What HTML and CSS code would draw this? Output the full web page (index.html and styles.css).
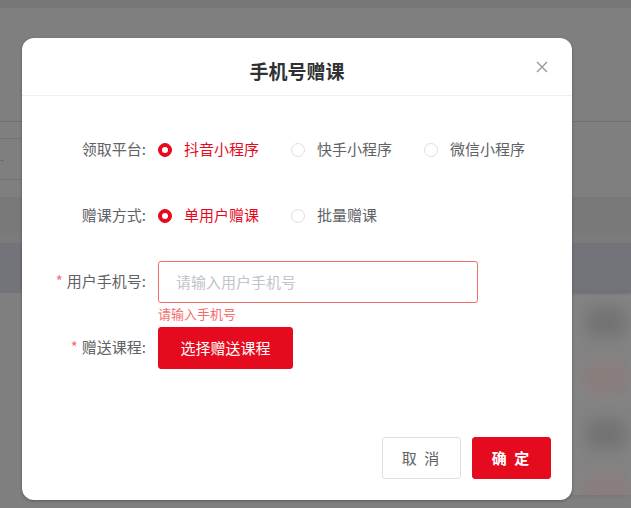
FILE: index.html
```html
<!DOCTYPE html>
<html lang="zh-CN">
<head>
    <meta charset="UTF-8">
    <meta name="viewport" content="width=device-width, initial-scale=1.0">
    <title>手机号赠课</title>
    <link rel="stylesheet" href="styles.css">
</head>
<body>
    <!-- dimmed page behind the dialog -->
    <div class="page">
        <div class="topbar"></div>
        <div class="hline top-line"></div>
        <div class="filter-row">
            <span class="dash">-</span>
        </div>
        <div class="band"></div>
        <div class="strip"></div>
        <div class="table-head"></div>
        <div class="table-body">
            <div class="side-card">
                <div class="blob dark"></div>
                <div class="blob pink"></div>
                <div class="blob dark"></div>
                <div class="blob pink"></div>
            </div>
        </div>
    </div>

    <div class="dialog">
        <div class="dialog-header">
            <span class="dialog-title">手机号赠课</span>
            <svg class="close" viewBox="0 0 12 12" width="12" height="12">
                <path d="M1 1 L11 11 M11 1 L1 11" stroke="#909399" stroke-width="1.2" fill="none"/>
            </svg>
        </div>

        <div class="dialog-body">
            <div class="form-item">
                <label class="form-label">领取平台:</label>
                <div class="form-content">
                    <span class="radio checked"><span class="radio-dot"></span>抖音小程序</span>
                    <span class="radio"><span class="radio-dot"></span>快手小程序</span>
                    <span class="radio"><span class="radio-dot"></span>微信小程序</span>
                </div>
            </div>

            <div class="form-item">
                <label class="form-label">赠课方式:</label>
                <div class="form-content">
                    <span class="radio checked"><span class="radio-dot"></span>单用户赠课</span>
                    <span class="radio"><span class="radio-dot"></span>批量赠课</span>
                </div>
            </div>

            <div class="form-item tight">
                <label class="form-label"><span class="req">*</span>用户手机号:</label>
                <div class="form-content">
                    <input class="input is-error" type="text" placeholder="请输入用户手机号">
                </div>
            </div>
            <div class="form-error">请输入手机号</div>

            <div class="form-item">
                <label class="form-label"><span class="req">*</span>赠送课程:</label>
                <div class="form-content">
                    <button class="btn btn-primary btn-pick">选择赠送课程</button>
                </div>
            </div>
        </div>

        <div class="dialog-footer">
            <button class="btn btn-default">取 消</button>
            <button class="btn btn-primary">确 定</button>
        </div>
    </div>
</body>
</html>
```

FILE: styles.css
```css
* { box-sizing: border-box; }

body {
    margin: 0;
    background: #7f7f7f;
    font-family: "Noto Sans CJK SC", "Noto Sans", sans-serif;
    overflow: hidden;
}

.page {
    width: 631px;
    height: 508px;
}
.topbar {
    height: 8px;
    background: #777;
}
.hline {
    height: 1px;
    background: #6f6f6f;
}
.top-line { margin-top: 113px; }
.filter-row {
    height: 42px;
    width: 22px;
    border-top: 1px solid #727272;
    border-bottom: 1px solid #727272;
    margin-top: 16px;
}
.dash {
    color: #5d6a66;
    font-size: 12px;
    line-height: 1;
    display: block;
    padding-top: 14px;
}
.band {
    height: 36px;
    margin-top: 17px;
    background: #787878;
}
.strip {
    height: 10px;
    background: #7c7a7b;
}
.table-head {
    height: 50px;
    background: #737479;
}
.table-body {
    display: flex;
    justify-content: flex-end;
    padding-top: 2px;
}
.side-card {
    width: 59px;
    height: 200px;
    background: #848484;
    box-shadow: -3px 0 6px rgba(0,0,0,0.12);
    padding: 12px 0 0 14px;
    overflow: hidden;
}
.blob {
    width: 40px;
    height: 30px;
    filter: blur(8px);
    margin-bottom: 26px;
}
.blob.dark { background: #727272; }
.blob.pink { background: #8b7c7c; }

/* dialog */
.dialog {
    position: absolute;
    left: 22px;
    top: 38px;
    width: 550px;
    height: 462px;
    background: #fff;
    border-radius: 12px;
    box-shadow: 0 1px 3px rgba(0,0,0,0.3);
}
.dialog-header {
    position: relative;
    height: 58px;
    padding-top: 20px;
    text-align: center;
    border-bottom: 1px solid #ebeef5;
}
.dialog-title {
    font-size: 19px;
    font-weight: bold;
    line-height: 26px;
    color: #303133;
}
.close {
    position: absolute;
    left: 514px;
    top: 23px;
}

.dialog-body {
    padding-top: 33px;
}
.form-item {
    display: flex;
    align-items: center;
    height: 42px;
    margin-bottom: 24px;
}
.form-item.tight { margin-bottom: 0; }
.form-label {
    width: 136px;
    padding: 0 12px 3px 0;
    text-align: right;
    font-size: 15px;
    color: #606266;
}
.req {
    color: #f56c6c;
    margin-right: 4px;
}
.form-content {
    display: flex;
    align-items: center;
}

.radio {
    display: flex;
    align-items: center;
    font-size: 15px;
    color: #606266;
    margin-right: 32px;
    padding-bottom: 3px;
}
.radio-dot {
    width: 14px;
    height: 14px;
    border: 1px solid #dcdfe6;
    border-radius: 50%;
    margin: 2px 12px 0 0;
    position: relative;
}
.radio.checked { color: #e60a1e; }
.radio.checked .radio-dot {
    background: #e60a1e;
    border-color: #e60a1e;
}
.radio.checked .radio-dot::after {
    content: "";
    position: absolute;
    left: 3px;
    top: 3px;
    width: 6px;
    height: 6px;
    border-radius: 50%;
    background: #fff;
}

.input {
    width: 320px;
    height: 42px;
    border: 1px solid #dcdfe6;
    border-radius: 3px;
    padding: 0 17px 2px;
    font-size: 15px;
    font-family: inherit;
    color: #606266;
    outline: none;
}
.input.is-error { border-color: #f56c6c; }
.input::placeholder { color: #c0c4cc; }

.form-error {
    height: 24px;
    padding: 3px 0 0 136px;
    font-size: 13px;
    line-height: 15px;
    color: #f56c6c;
}

.btn {
    height: 42px;
    border-radius: 3px;
    font-size: 15px;
    font-family: inherit;
    padding-bottom: 2px;
    cursor: pointer;
}
.btn-primary {
    background: #e60a1e;
    border: 1px solid #e60a1e;
    color: #fff;
}
.btn-default {
    background: #fff;
    border: 1px solid #dcdfe6;
    color: #606266;
}
.btn-pick {
    width: 135px;
}

.dialog-footer {
    display: flex;
    justify-content: flex-end;
    gap: 11px;
    padding: 44px 21px 0 0;
}
.dialog-footer .btn {
    width: 79px;
    letter-spacing: 2px;
}
.dialog-footer .btn-primary { font-weight: bold; }
```
